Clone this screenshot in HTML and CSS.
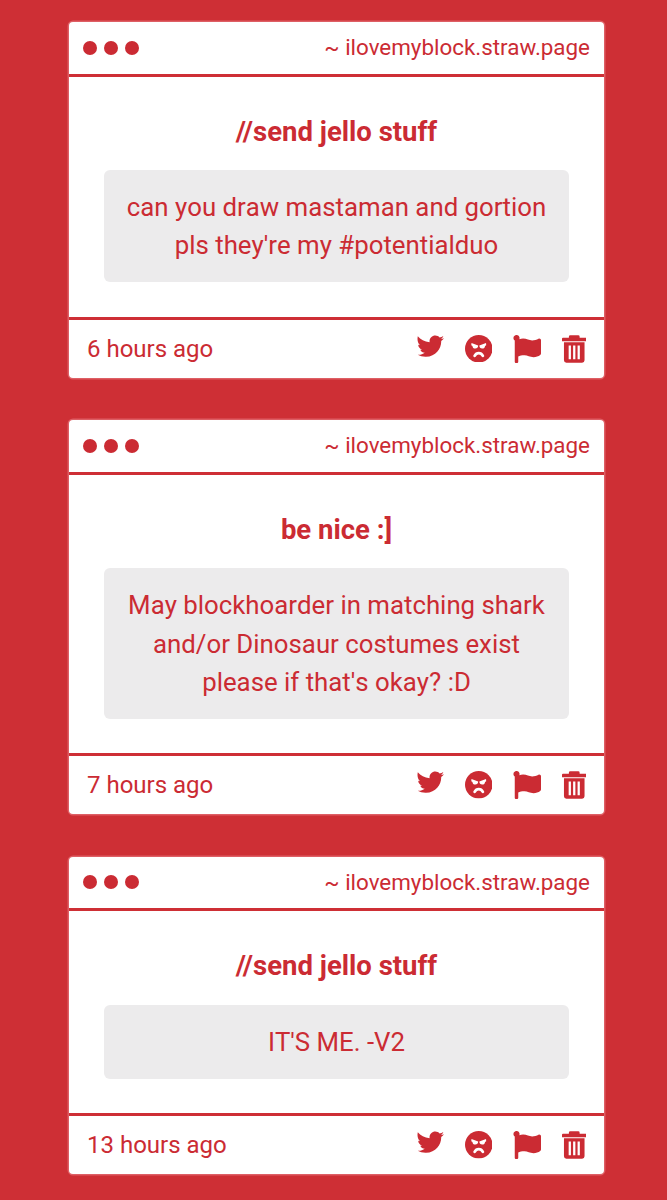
FILE: index.html
```html
<!DOCTYPE html>
<html lang="en">
<head>
<meta charset="utf-8">
<title>ilovemyblock.straw.page</title>
<link rel="stylesheet" href="styles.css">
</head>
<body>
<svg class="defs" width="0" height="0" aria-hidden="true">
  <symbol id="i-twitter" viewBox="0 0 27 22"><path d="M.8 1.200C3.500 4.600 7.500 6.800 12.600 7.200 12.100 3.500 14.800.6 18.300.6c1.700 0 3.200.7 4.300 1.900 1.300-.3 2.600-.8 3.700-1.500-.4 1.300-1.300 2.400-2.400 3 1.100-.1 2.100-.4 3.100-.8-.8 1.100-1.700 2.100-2.800 2.900C24.500 13 19 21.500 9 21.800c-3.200.1-6-.8-8.200-2 2.700.2 5-.6 7-2-2.100-.1-3.800-1.400-4.500-3.100l1.900-.2C3 14 1.300 12.100 1.200 9.700l2 .5C1.100 8.700-.1 5.500.8 1.200z"/></symbol>
  <symbol id="i-angry" viewBox="0 0 28 28"><circle cx="14" cy="14" r="14"/><path class="cut" d="M6.600 8.200l6.800 2.600c0 1.900-1.100 3-2.900 3-1.700 0-2.900-1.100-2.900-2.700l-1.200-.6zM21.400 8.200l-6.800 2.600c0 1.900 1.100 3 2.900 3 1.700 0 2.900-1.100 2.900-2.700l1.200-.6z"/><path class="mouth" d="M9.800 21.200c1-1.900 2.500-2.800 4.200-2.800s3.200.9 4.200 2.800"/></symbol>
  <symbol id="i-flag" viewBox="0 0 512 512"><path d="M349.565 98.783C295.978 98.783 251.721 64 184.348 64c-24.955 0-47.309 4.384-68.045 12.013a55.947 55.947 0 0 0 3.586-23.562C118.117 24.015 94.806 1.206 66.338.048 34.345-1.254 8 24.296 8 56c0 19.026 9.497 35.825 24 45.945V488c0 13.255 10.745 24 24 24h16c13.255 0 24-10.745 24-24v-94.4c28.311-12.064 63.582-22.122 114.435-22.122 53.588 0 97.844 34.783 165.217 34.783 48.169 0 86.667-16.294 122.505-40.858C506.840 359.452 512 349.571 512 339.045v-243.1c0-23.393-24.269-38.870-45.485-29.016-34.338 15.948-76.454 31.854-116.950 31.854z"/></symbol>
  <symbol id="i-trash" viewBox="0 0 25 28"><path d="M8.500 0h8A1.500 1.500 0 0 1 18 1.500V2.500h6a1 1 0 0 1 1 1V6H0V3.500a1 1 0 0 1 1-1h6V1.500A1.500 1.500 0 0 1 8.500 0z"/><path fill-rule="evenodd" d="M2 7.200h21V25.500a2.500 2.500 0 0 1-2.500 2.500h-16A2.500 2.500 0 0 1 2 25.500zM6.800 10.500v14h2.300v-14zM11.350 10.500v14h2.300v-14zM15.900 10.500v14h2.300v-14z"/></symbol>
</svg>

<main class="feed">
  <article class="card">
    <header class="bar">
      <div class="dots"><span class="dot"></span><span class="dot"></span><span class="dot"></span></div>
      <div class="url">~ ilovemyblock.straw.page</div>
    </header>
    <section class="body">
      <h2 class="title">//send jello stuff</h2>
      <p class="msg">can you draw mastaman and gortion pls they're my #potentialduo</p>
    </section>
    <footer class="foot">
      <span class="time">6 hours ago</span>
      <div class="icons">
        <svg class="icon tw"><use href="#i-twitter"/></svg>
        <svg class="icon fa"><use href="#i-angry"/></svg>
        <svg class="icon"><use href="#i-flag"/></svg>
        <svg class="icon tr"><use href="#i-trash"/></svg>
      </div>
    </footer>
  </article>

  <article class="card">
    <header class="bar">
      <div class="dots"><span class="dot"></span><span class="dot"></span><span class="dot"></span></div>
      <div class="url">~ ilovemyblock.straw.page</div>
    </header>
    <section class="body">
      <h2 class="title">be nice :]</h2>
      <p class="msg">May blockhoarder in matching shark and/or Dinosaur costumes exist please if that's okay? :D</p>
    </section>
    <footer class="foot">
      <span class="time">7 hours ago</span>
      <div class="icons">
        <svg class="icon tw"><use href="#i-twitter"/></svg>
        <svg class="icon fa"><use href="#i-angry"/></svg>
        <svg class="icon"><use href="#i-flag"/></svg>
        <svg class="icon tr"><use href="#i-trash"/></svg>
      </div>
    </footer>
  </article>

  <article class="card">
    <header class="bar">
      <div class="dots"><span class="dot"></span><span class="dot"></span><span class="dot"></span></div>
      <div class="url">~ ilovemyblock.straw.page</div>
    </header>
    <section class="body">
      <h2 class="title">//send jello stuff</h2>
      <p class="msg">IT'S ME. -V2</p>
    </section>
    <footer class="foot">
      <span class="time">13 hours ago</span>
      <div class="icons">
        <svg class="icon tw"><use href="#i-twitter"/></svg>
        <svg class="icon fa"><use href="#i-angry"/></svg>
        <svg class="icon"><use href="#i-flag"/></svg>
        <svg class="icon tr"><use href="#i-trash"/></svg>
      </div>
    </footer>
  </article>
</main>
</body>
</html>
```

FILE: styles.css
```css
* { box-sizing: border-box; }

html, body { margin: 0; padding: 0; }

body {
  background: #ce2f35;
  color: #cb2b33;
  font-family: Roboto, "Liberation Sans", sans-serif;
  height: 1200px;
  overflow: hidden;
}

.defs { display: block; height: 0; }

.feed {
  display: flex;
  flex-direction: column;
  gap: 42.4px;
  padding: 22px 63px 0 69px;
}

.card {
  background: #fff;
  border-radius: 4px;
  box-shadow: 0 0 0 1.5px #de5f65;
  overflow: hidden;
}

.bar {
  display: flex;
  align-items: center;
  justify-content: space-between;
  height: 54.7px;
  padding: 0 14px 2px 14px;
  border-bottom: 3px solid #ce2f35;
}

.dots { display: flex; gap: 7px; margin-top: 1.5px; }

.dot {
  width: 14px;
  height: 14px;
  border-radius: 50%;
  background: #cb2b33;
}

.url { font-size: 22.4px; line-height: 24px; }

.body {
  padding: 36px 35px 34.5px;
  text-align: center;
}

.title {
  margin: 0 0 19.5px;
  font-size: 27.5px;
  line-height: 38px;
  font-weight: 700;
}

.msg {
  margin: 0;
  padding: 17.9px 20px;
  background: #ecebec;
  border-radius: 6px;
  font-size: 25.8px;
  font-kerning: none;
  line-height: 38.2px;
}

.foot {
  display: flex;
  align-items: center;
  justify-content: space-between;
  height: 61px;
  padding: 0 18px 0 18px;
  border-top: 3px solid #ce2f35;
}

.time { font-size: 24px; line-height: 30px; }

.icons { display: flex; align-items: flex-start; gap: 20.7px; }

.icon {
  display: block;
  width: 28px;
  height: 28px;
  fill: #cb2b33;
}

.tw { width: 27px; height: 22px; }

.fa { width: 27.5px; height: 27.5px; }

.tr { width: 24.5px; }

.cut { fill: #fff; }

.mouth { fill: none; stroke: #fff; stroke-width: 2.8; stroke-linecap: round; }
```
